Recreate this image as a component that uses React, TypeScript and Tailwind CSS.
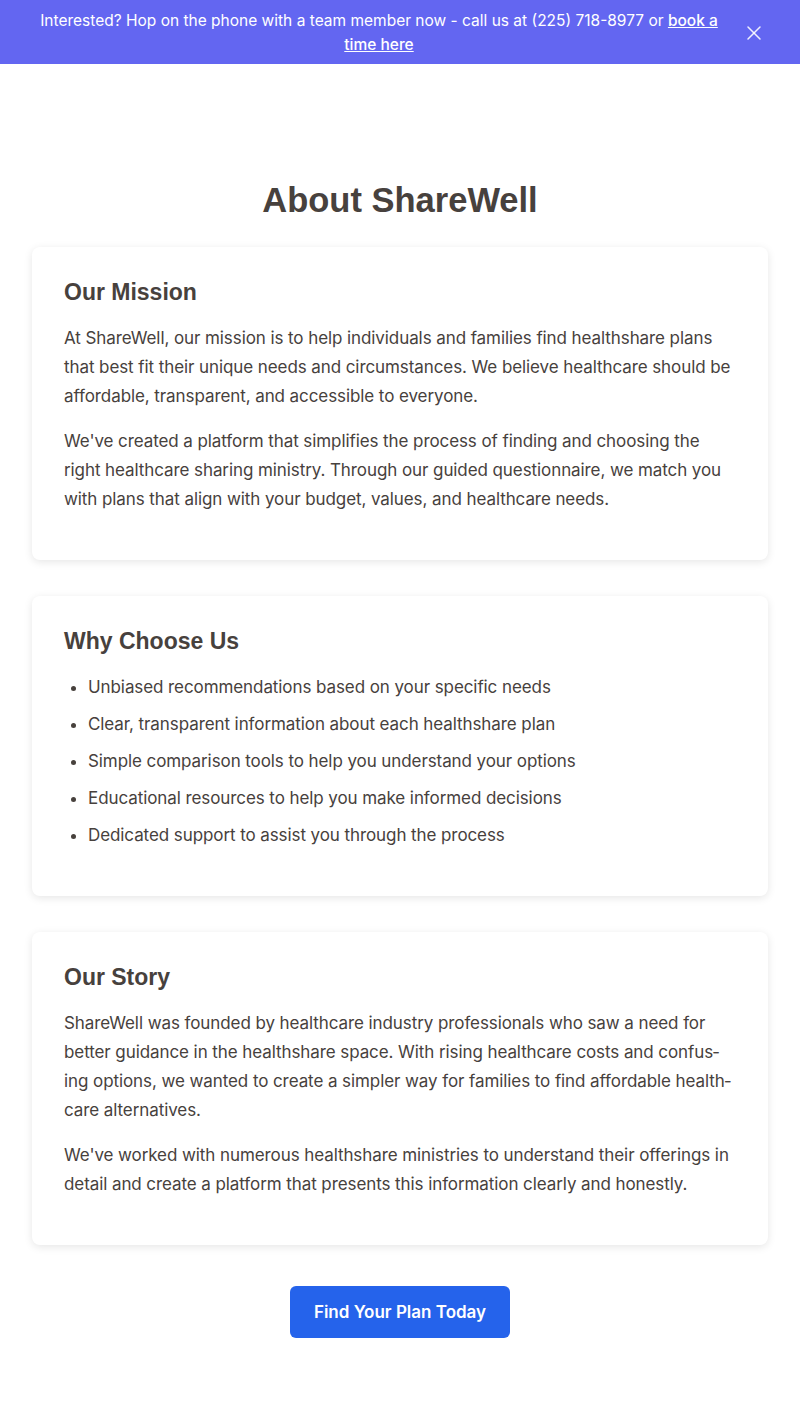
import { X } from "lucide-react";

const WHY_ITEMS = [
  "Unbiased recommendations based on your specific needs",
  "Clear, transparent information about each healthshare plan",
  "Simple comparison tools to help you understand your options",
  "Educational resources to help you make informed decisions",
  "Dedicated support to assist you through the process",
];

const headingFont = "font-['Liberation_Sans',Arial,sans-serif]";
const bodyText = "text-[17px] leading-[29px] tracking-[-0.005em]";

function Card({ title, children }: { title: string; children: React.ReactNode }) {
  return (
    <section className="bg-white rounded-lg shadow-[0_2px_8px_rgba(0,0,0,0.1)] px-8 pt-8 pb-[30px] mb-9">
      <h2 className={`${headingFont} text-[23px] leading-[26px] font-bold text-[#47413d] mb-[19px]`}>
        {title}
      </h2>
      {children}
    </section>
  );
}

export default function App() {
  return (
    <div lang="en" className="min-h-screen bg-white font-['Inter',sans-serif] text-[#47413d]">
      <div className="bg-[#6366f1] text-white flex items-center pl-4 pr-[34px] pt-[9px] pb-[7px]">
        <p className="flex-1 text-center text-[15.5px] leading-6 px-4">
          Interested? Hop on the phone with a team member now - call us at (225) 718-8977 or{" "}
          <a href="#" className="underline font-medium">
            book a time here
          </a>
        </p>
        <button className="text-white/90">
          <X size={24} strokeWidth={1.5} />
        </button>
      </div>

      <main className="px-8 pt-[116px] pb-16">
        <h1 className={`${headingFont} text-[34.5px] leading-10 font-bold text-center mb-[27px]`}>
          About ShareWell
        </h1>

        <Card title="Our Mission">
          <p className={`${bodyText} mb-4`}>
            At ShareWell, our mission is to help individuals and families find healthshare plans that
            best fit their unique needs and circumstances. We believe healthcare should be affordable,
            transparent, and accessible to everyone.
          </p>
          <p className={`${bodyText} mb-4`}>
            We've created a platform that simplifies the process of finding and choosing the right
            healthcare sharing ministry. Through our guided questionnaire, we match you with plans that
            align with your budget, values, and healthcare needs.
          </p>
        </Card>

        <Card title="Why Choose Us">
          <ul className="list-disc pl-6 mb-4 space-y-2">
            {WHY_ITEMS.map((item) => (
              <li key={item} className={bodyText}>
                {item}
              </li>
            ))}
          </ul>
        </Card>

        <Card title="Our Story">
          <p className={`${bodyText} mb-4 hyphens-auto`}>
            ShareWell was founded by healthcare industry professionals who saw a need for better
            guidance in the healthshare space. With rising healthcare costs and confus&shy;ing options, we
            wanted to create a simpler way for families to find affordable health&shy;care alternatives.
          </p>
          <p className={`${bodyText} mb-4 hyphens-auto`}>
            We've worked with numerous healthshare ministries to understand their offerings in detail
            and create a platform that presents this information clearly and honestly.
          </p>
        </Card>

        <div className="flex justify-center mt-[41px]">
          <button className="bg-[#2563eb] text-white text-[17px] leading-7 font-semibold px-6 py-3 rounded-md">
            Find Your Plan Today
          </button>
        </div>
      </main>
    </div>
  );
}
